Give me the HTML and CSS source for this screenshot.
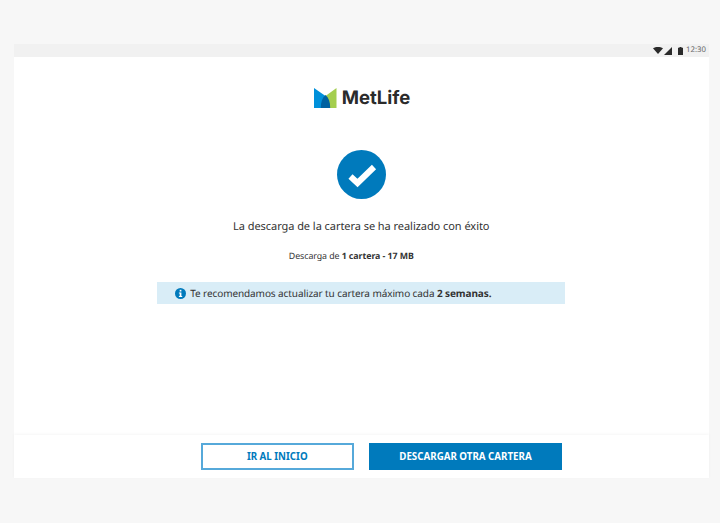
FILE: index.html
```html
<!DOCTYPE html>
<html lang="es">
<head>
<meta charset="utf-8">
<title>MetLife</title>
<link rel="stylesheet" href="styles.css">
</head>
<body>
<div class="device">
  <div class="status">
    <svg class="ic-wifi" width="10" height="7" viewBox="0 0 10 7"><path d="M0 1.300C2.800-.4 7.200-.4 10 1.300L5 7Z" fill="#2a2a2a"/></svg>
    <svg class="ic-signal" width="8" height="8" viewBox="0 0 8 8"><path d="M8 0V8H0Z" fill="#2a2a2a"/></svg>
    <svg class="ic-batt" width="5" height="8" viewBox="0 0 5 8"><path d="M1.500 0h2v.8H5V8H0V.8h1.500Z" fill="#2a2a2a"/></svg>
    <span class="clock">12:30</span>
  </div>
  <main class="content">
    <div class="logo">
      <svg width="23" height="20" viewBox="0 0 23 20">
        <path d="M0 0 11.500 8V20H0Z" fill="#0090da"/>
        <path d="M22.500 0 11.500 8V20H22.500Z" fill="#a4ce4e"/>
        <path d="M11.500 7C8.300 9.500 6.800 14 6.800 20H16.200C16.200 14 14.700 9.500 11.500 7Z" fill="#0061a0"/>
      </svg>
      <span class="logo-text">MetLife</span>
    </div>
    <div class="check">
      <svg width="49" height="49" viewBox="0 0 49 49">
        <circle cx="24.500" cy="24.500" r="24.500" fill="#007abc"/>
        <path d="M13.500 26.500 20.500 33 37 17" fill="none" stroke="#fff" stroke-width="6"/>
      </svg>
    </div>
    <p class="headline">La descarga de la cartera se ha realizado con éxito</p>
    <p class="detail">Descarga de <b>1 cartera - 17 MB</b></p>
    <div class="notice">
      <svg width="11" height="11" viewBox="0 0 11 11">
        <circle cx="5.500" cy="5.500" r="5.500" fill="#007abc"/>
        <rect x="4.700" y="1.800" width="1.700" height="1.700" fill="#fff"/>
        <path d="M3.900 4.500H6.400V8H7.200V9H3.900V8H4.700V5.500H3.900Z" fill="#fff"/>
      </svg>
      <span>Te recomendamos actualizar tu cartera máximo cada <b>2 semanas.</b></span>
    </div>
  </main>
  <footer class="actions">
    <button class="btn btn-outline">IR AL INICIO</button>
    <button class="btn btn-solid">DESCARGAR OTRA CARTERA</button>
  </footer>
</div>
</body>
</html>
```
FILE: styles.css
```css
* { box-sizing: border-box; }
html, body { margin: 0; height: 100%; }
body {
  background: #f7f7f7;
  padding: 44px 11.500px 45.500px 14px;
  font-family: "Noto Sans", sans-serif;
  color: #333;
  overflow: hidden;
  text-rendering: geometricPrecision;
}
.device {
  height: 433.500px;
  display: flex;
  flex-direction: column;
  background: #fff;
}
.status {
  height: 13px;
  flex: none;
  background: #f1f1f1;
  display: flex;
  align-items: center;
  justify-content: flex-end;
  padding-right: 3.500px;
}
.ic-wifi { margin-right: 1px; }
.ic-signal { margin-right: 6px; }
.ic-batt { margin-right: 3px; }
.clock { font-size: 7.800px; line-height: 13px; color: #666; width: 19px; }
.content {
  flex: 1;
  display: flex;
  flex-direction: column;
  align-items: center;
}
.logo {
  margin-top: 31px;
  height: 20px;
  display: flex;
  align-items: center;
  gap: 4.500px;
  padding-left: 2px;
}
.logo-text {
  font-family: "Inter", "Noto Sans", sans-serif;
  font-weight: 700;
  font-size: 18.500px;
  line-height: 20px;
  color: #2b2b2b;
}
.check { margin-top: 42px; height: 49px; }
.headline {
  margin: 20px 0 0;
  font-size: 11px;
  letter-spacing: -.05px;
  line-height: 16px;
  color: #333;
}
.detail {
  margin: 14px 20px 0 0;
  font-size: 8.800px;
  letter-spacing: -.06px;
  line-height: 14px;
  color: #333;
}
.detail b, .notice b { font-weight: 700; }
.notice {
  margin-top: 19px;
  width: 408px;
  height: 22px;
  background: #d9edf7;
  display: flex;
  align-items: center;
  gap: 4.500px;
  padding-left: 18px;
  font-size: 10px;
  letter-spacing: -.09px;
  color: #333;
  margin-left: -1px;
}
.actions {
  height: 42.500px;
  flex: none;
  box-shadow: 0 -1px 3px rgba(0, 0, 0, .04);
  display: flex;
  align-items: flex-start;
  gap: 15.500px;
  padding: 8px 0 0 187px;
}
.btn {
  height: 27px;
  font-family: "Noto Sans", sans-serif;
  font-weight: 700;
  font-size: 9.750px;
  padding: 0;
  border-radius: 0;
}
.btn-outline {
  width: 152.500px;
  background: #fff;
  border: 2px solid #56a9da;
  color: #007abc;
}
.btn-solid {
  width: 193px;
  background: #007abc;
  border: 0;
  color: #fff;
}
```
